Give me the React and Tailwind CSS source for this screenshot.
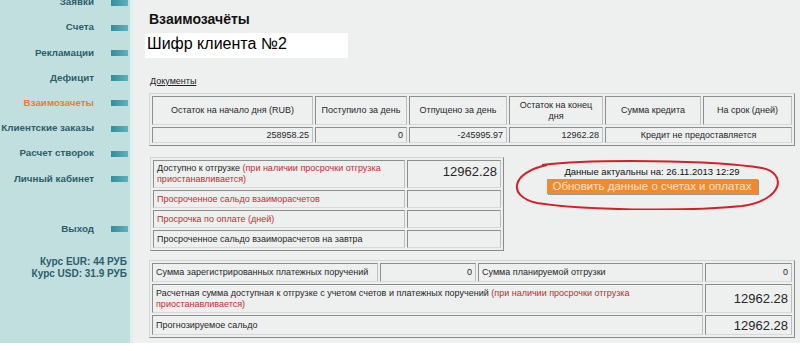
import React from 'react';

const font = { fontFamily: '"Liberation Sans", Arial, sans-serif' };

const menu = [
  { label: 'Заявки' },
  { label: 'Счета' },
  { label: 'Рекламации' },
  { label: 'Дефицит' },
  { label: 'Взаимозачеты', active: true },
  { label: 'Клиентские заказы' },
  { label: 'Расчет створок' },
  { label: 'Личный кабинет' },
];

const MenuItem = ({ label, active }) => (
  <div className="h-[25.2px] flex items-center justify-end pr-[2px]">
    <span className={`whitespace-nowrap text-[9.8px] font-bold ${active ? 'text-[#ea7a35]' : 'text-[#2b5e6c]'}`}>{label}</span>
    <span className="ml-[17px] w-[17px] h-[6px] shrink-0 bg-gradient-to-r from-[#2f8e9c] to-[#5fb2bb]" />
  </div>
);

const Sidebar = () => (
  <div className="w-[133px] shrink-0 bg-[#c2dfe0] border-r-[3px] border-[#e0eeee] h-full overflow-hidden">
    <div className="-mt-[10px]">
      {menu.map((m) => (
        <MenuItem key={m.label} {...m} />
      ))}
      <div className="h-[25px]" />
      <MenuItem label="Выход" />
      <div className="mt-[14px] pr-[3px] text-right text-[10px] font-bold text-[#2b5e6c] leading-[12px] whitespace-nowrap">
        <div>Курс EUR: 44 РУБ</div>
        <div>Курс USD: 31.9 РУБ</div>
      </div>
    </div>
  </div>
);

const td = 'border border-t-[#8d8d8d] border-l-[#8d8d8d] border-r-[#bdbdbd] border-b-[#d8d8d8] px-[3px] py-0 leading-[11px]';
const tableCls = 'border-separate border-spacing-[2px] border border-t-[#d4d4d4] border-l-[#d4d4d4] border-r-[#8a8a8a] border-b-[#8a8a8a] table-fixed text-[9px] text-[#262626]';

const Red = ({ children }) => <span className="text-[#c42a2e]">{children}</span>;

const App = () => {
  return (
    <div className="w-[800px] h-[351px] bg-white overflow-hidden" style={font}>
      <div className="flex h-[343px]">
        <Sidebar />
        <div className="flex-1 bg-[#eef0f0] pl-[16px] pt-[10px]">
          <h1 className="text-[14px] font-bold text-[#111] leading-[18px]">Взаимозачёты</h1>
          <div className="mt-[5px] -ml-[4px] w-[203px] h-[25px] bg-white pl-[2px] text-[16px] leading-[22px] text-black">
            Шифр клиента №2
          </div>
          <div className="mt-[18px] ml-[1px] text-[9px] underline text-[#222] leading-[11px]">Документы</div>

          <table className={`${tableCls} mt-[6px] w-[646px]`}>
            <colgroup>
              <col className="w-[161px]" />
              <col className="w-[92px]" />
              <col className="w-[98px]" />
              <col className="w-[94px]" />
              <col className="w-[96px]" />
              <col />
            </colgroup>
            <tbody>
              <tr className="h-[29px] text-center">
                <td className={td}>Остаток на начало дня (RUB)</td>
                <td className={td}>Поступило за день</td>
                <td className={td}>Отпущено за день</td>
                <td className={td}>Остаток на конец дня</td>
                <td className={td}>Сумма кредита</td>
                <td className={td}>На срок (дней)</td>
              </tr>
              <tr className="h-[16px]">
                <td className={`${td} text-right`}>258958.25</td>
                <td className={`${td} text-right`}>0</td>
                <td className={`${td} text-right`}>-245995.97</td>
                <td className={`${td} text-right`}>12962.28</td>
                <td className={`${td} text-center`} colSpan={2}>Кредит не предоставляется</td>
              </tr>
            </tbody>
          </table>

          <div className="flex mt-[11px]">
            <table className={`${tableCls} w-[354px] ml-[1px]`}>
              <colgroup>
                <col />
                <col className="w-[94px]" />
              </colgroup>
              <tbody>
                <tr className="h-[28px]">
                  <td className={td}>
                    Доступно к отгрузке <Red>(при наличии просрочки отгрузка приостанавливается)</Red>
                  </td>
                  <td className={`${td} text-right text-[13px] leading-[15px] align-top pt-[3px]`}>12962.28</td>
                </tr>
                <tr className="h-[18px]">
                  <td className={td}><Red>Просроченное сальдо взаиморасчетов</Red></td>
                  <td className={td}></td>
                </tr>
                <tr className="h-[18px]">
                  <td className={td}><Red>Просрочка по оплате (дней)</Red></td>
                  <td className={td}></td>
                </tr>
                <tr className="h-[18px]">
                  <td className={td}>Просроченное сальдо взаиморасчетов на завтра</td>
                  <td className={td}></td>
                </tr>
              </tbody>
            </table>

            <div className="relative flex-1 flex flex-col items-center pt-[9px]">
              <svg className="absolute left-[8px] top-[3px]" width="270" height="50" viewBox="0 0 270 50">
                <path
                  d="M30 5 C 80 -1, 200 0, 250 8 C 275 13, 272 40, 230 46 C 170 52, 70 50, 25 43 C -6 36, 0 12, 35 5"
                  fill="none"
                  stroke="#d3212b"
                  strokeWidth="2"
                />
              </svg>
              <div className="text-[9.5px] text-[#111] leading-[12px]">Данные актуальны на: 26.11.2013 12:29</div>
              <button className="mt-[1px] w-[211px] h-[15px] bg-[#f08a2f] text-[#fde3cf] text-[11.5px] leading-[15px] shadow-[1px_1px_0_#9a9a9a]">
                Обновить данные о счетах и оплатах
              </button>
            </div>
          </div>

          <table className={`${tableCls} mt-[9px] w-[646px]`}>
            <colgroup>
              <col className="w-[226px]" />
              <col className="w-[96px]" />
              <col className="w-[225px]" />
              <col />
            </colgroup>
            <tbody>
              <tr className="h-[19px]">
                <td className={td}>Сумма зарегистрированных платежных поручений</td>
                <td className={`${td} text-right`}>0</td>
                <td className={td}>Сумма планируемой отгрузки</td>
                <td className={`${td} text-right`}>0</td>
              </tr>
              <tr className="h-[29px]">
                <td className={td} colSpan={3}>
                  Расчетная сумма доступная к отгрузке с учетом счетов и платежных поручений{' '}
                  <Red>(при наличии просрочки отгрузка приостанавливается)</Red>
                </td>
                <td className={`${td} text-right text-[13px] leading-[15px]`}>12962.28</td>
              </tr>
              <tr className="h-[20px]">
                <td className={td} colSpan={3}>Прогнозируемое сальдо</td>
                <td className={`${td} text-right text-[13px] leading-[15px]`}>12962.28</td>
              </tr>
            </tbody>
          </table>
        </div>
      </div>
    </div>
  );
};

export default App;
